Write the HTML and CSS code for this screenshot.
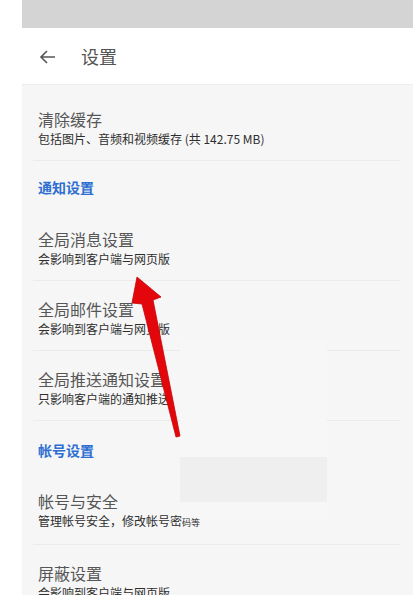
FILE: index.html
```html
<!DOCTYPE html>
<html lang="zh">
<head>
    <meta charset="UTF-8">
    <meta name="viewport" content="width=device-width, initial-scale=1.0">
    <title>设置</title>
    <link rel="stylesheet" href="styles.css">
</head>
<body>
    <div class="page">
        <div class="status-bar"></div>
        <div class="toolbar">
            <svg class="back" width="18" height="16" viewBox="0 0 18 16">
                <path d="M16 8H2M8 2L2 8l6 6" fill="none" stroke="#555" stroke-width="1.6"/>
            </svg>
            <span class="toolbar-title">设置</span>
        </div>
        <div class="list">
            <div class="item">
                <div class="item-title">清除缓存</div>
                <div class="item-sub">包括图片、音频和视频缓存 (共 142.75 MB)</div>
            </div>
            <div class="section">通知设置</div>
            <div class="item">
                <div class="item-title">全局消息设置</div>
                <div class="item-sub">会影响到客户端与网页版</div>
            </div>
            <div class="item">
                <div class="item-title">全局邮件设置</div>
                <div class="item-sub">会影响到客户端与网页版</div>
            </div>
            <div class="item">
                <div class="item-title">全局推送通知设置</div>
                <div class="item-sub">只影响客户端的通知推送</div>
            </div>
            <div class="section section-second">帐号设置</div>
            <div class="item">
                <div class="item-title">帐号与安全</div>
                <div class="item-sub">管理帐号安全，修改帐号密<small>码等</small></div>
            </div>
            <div class="item">
                <div class="item-title">屏蔽设置</div>
                <div class="item-sub">会影响到客户端与网页版</div>
            </div>
        </div>
    </div>

    <!-- 遮挡块 -->
    <div class="blur-box">
        <div class="blur-inner"></div>
    </div>

    <!-- 红色箭头标注 -->
    <svg class="pointer" width="417" height="595" viewBox="0 0 417 595">
        <path d="M137 277 L161 297 L153 300 L180 436 L176 437 L142 304 L132 303 Z" fill="#e3070b" stroke="#c40408" stroke-width="0.8"/>
    </svg>
</body>
</html>
```

FILE: styles.css
```css
* {
    box-sizing: border-box;
}

body {
    margin: 0;
    background: #fff;
    font-family: "Noto Sans CJK SC", "Noto Sans", sans-serif;
    position: relative;
    height: 595px;
    overflow: hidden;
}

.page {
    margin-left: 22px;
    width: 391px;
    height: 595px;
    display: flex;
    flex-direction: column;
}

.status-bar {
    flex-shrink: 0;
    height: 28px;
    background: #d4d4d4;
}

.toolbar {
    flex-shrink: 0;
    height: 57px;
    background: #fff;
    display: flex;
    align-items: center;
    padding-left: 17px;
    gap: 24px;
    border-bottom: 1px solid #ececec;
}

.back {
    margin-top: 2px;
}

.toolbar-title {
    font-size: 18px;
    color: #555;
    line-height: 20px;
}

.list {
    flex: 1 0 auto;
    background: #f6f6f6;
    padding-top: 6px;
}

.item {
    margin: 0 13px 0 11px;
    padding: 18px 5px 11px;
    border-bottom: 1px solid #ebebeb;
}

.item:last-child {
    border-bottom: none;
}

.item-title,
.item-sub {
    position: relative;
    z-index: 2;
}

.item-title {
    font-size: 16px;
    line-height: 20px;
    color: #565656;
}

.item-sub {
    font-size: 12px;
    line-height: 20px;
    color: #2e2e2e;
}

.item-sub small {
    font-size: 9px;
}

.section {
    margin: 0 13px 0 11px;
    padding: 16px 5px 14px;
    font-size: 14px;
    line-height: 20px;
    font-weight: bold;
    color: #2c6ed2;
}

.section-second {
    padding: 19px 5px 13px;
}

.blur-box {
    position: absolute;
    z-index: 1;
    left: 180px;
    top: 340px;
    width: 147px;
    height: 180px;
    background: #f7f7f7;
}

.blur-inner {
    position: absolute;
    left: 0;
    top: 117px;
    width: 147px;
    height: 45px;
    background: #efefef;
}

.pointer {
    position: absolute;
    z-index: 3;
    left: 0;
    top: 0;
    pointer-events: none;
}
```
